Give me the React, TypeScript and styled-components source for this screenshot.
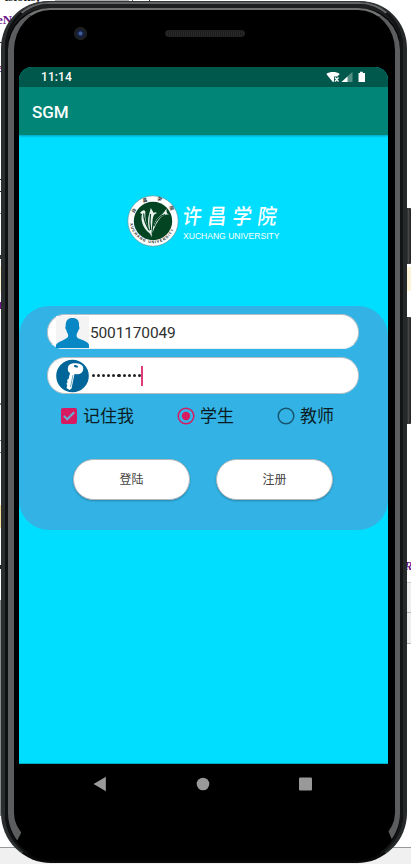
import React from 'react';
import styled, { createGlobalStyle } from 'styled-components';

const Global = createGlobalStyle`
  *, *::before, *::after { box-sizing: border-box; }
  html, body, #root { margin: 0; padding: 0; }
  body { background: #fff; overflow: hidden; font-family: Roboto, "Noto Sans CJK SC", sans-serif; }
`;

const Desktop = styled.main`
  position: relative;
  width: 411px;
  height: 864px;
  padding: 1px 3px 1px 1px;
  overflow: hidden;
  background: #fff;
`;

const Fragment = styled.i<{ $x: number; $y: number; $w: number; $h: number; $c: string }>`
  position: absolute;
  left: ${p => p.$x}px;
  top: ${p => p.$y}px;
  width: ${p => p.$w}px;
  height: ${p => p.$h}px;
  background: ${p => p.$c};
`;

const CodeText = styled.span<{ $x: number; $y: number; $italic?: boolean; $c?: string }>`
  position: absolute;
  left: ${p => p.$x}px;
  top: ${p => p.$y}px;
  font: ${p => (p.$italic ? 'italic' : 'normal')} bold 13px/16px "Liberation Serif", serif;
  color: ${p => p.$c ?? '#6b1288'};
  white-space: nowrap;
`;

const SideKey = styled.i<{ $y: number; $h: number }>`
  position: absolute;
  left: 406px;
  top: ${p => p.$y}px;
  width: 5px;
  height: ${p => p.$h}px;
  border-radius: 1px;
  background: linear-gradient(90deg, #101112 0 1px, #555 2px, #3a3b3c 3px, #222 5px);
`;

const Shell = styled.div`
  position: relative;
  width: 406px;
  height: 862px;
  border-radius: 47px 47px 50px 50px;
  border: 4px solid;
  border-width: 1px 4px 2px 4px;
  border-color: #343738 #26292a #0b0b0b #2b2e2f;
  background: #080808;
`;

const RimDark = styled.div`
  height: 100%;
  border-radius: 44px 44px 47px 47px;
  border: 1px solid;
  border-width: 2px 3px 1px 3px;
  border-color: #626465 #141516 #050505 #101112;
  background: #000;
`;

const RimGap = styled.div`
  height: 100%;
  border-radius: 41px 41px 46px 46px;
  border: solid #1d1f20;
  border-width: 4px 0 1px;
  border-bottom-color: #020202;
  background: #000;
`;

const RimLight = styled.div`
  height: 100%;
  border-radius: 42px 42px 46px 46px;
  border: solid;
  border-width: 2px 5px 12px 6px;
  border-color: #717373 #5b5d5e #000 #5b5d5e;
  background: #000;
`;

const Face = styled.div`
  height: 100%;
  margin: 0 7px 0 5px;
  display: flex;
  flex-direction: column;
`;

const Earpiece = styled.div`
  position: relative;
  height: 57px;
  flex: none;
`;

const Camera = styled.i`
  position: absolute;
  left: 55px;
  top: 17px;
  width: 13px;
  height: 13px;
  border-radius: 50%;
  background: radial-gradient(circle, #45619b 0 1.3px, #172349 2.4px 3.2px, #181a1c 4.5px, #222426 6px);
`;

const Speaker = styled.i`
  position: absolute;
  left: 146px;
  top: 20px;
  width: 80px;
  height: 7px;
  border-radius: 3px;
  background: repeating-linear-gradient(90deg, #1b1b1b 0 1px, #292929 1px 2px);
  border: 1px solid #222;
`;

const Screen = styled.section`
  width: 369px;
  height: 738px;
  flex: none;
  display: flex;
  flex-direction: column;
  border-radius: 13px 13px 0 0;
  overflow: hidden;
  background: #00deff;
`;

const StatusBar = styled.header`
  height: 20px;
  display: flex;
  align-items: center;
  justify-content: space-between;
  padding: 0 22px;
  background: #00574b;
  color: #fff;
  font-size: 12px;
  font-weight: 500;
  letter-spacing: 0.1px;
`;

const AppBar = styled.div`
  height: 48px;
  display: flex;
  align-items: center;
  padding: 2px 13px 0;
  background: #008577;
  color: #fff;
  font-size: 17px;
  font-weight: 500;
  box-shadow: 0 1px 2px rgba(0, 60, 70, 0.4);
  z-index: 1;
`;

const Brand = styled.div`
  height: 171px;
  display: flex;
  padding: 59px 0 0 108px;
  gap: 4px;
`;

const BrandText = styled.div`
  color: #fff;
  display: flex;
  flex-direction: column;
  padding-top: 7px;
`;

const BrandCn = styled.div`
  display: flex;
  gap: 6px;
  height: 28px;
  padding-left: 0;
  font: 500 19px/27px "Noto Sans CJK SC", sans-serif;
`;

const BrandGlyph = styled.span`
  transform: skewX(-8deg) scaleY(1.12);
`;

const BrandEn = styled.div`
  font: 9.5px/13px "Liberation Sans", Arial, sans-serif;
  transform: scaleX(0.9);
  transform-origin: left;
  width: 107px;
  white-space: nowrap;
`;

const Panel = styled.form`
  height: 224px;
  margin: 0;
  border-radius: 30px;
  padding: 8px 28px 0;
  background: #33b3e5;
`;

const Field = styled.label<{ $h: number; $gap: number; $flat?: boolean }>`
  display: flex;
  align-items: center;
  height: ${p => p.$h}px;
  width: 312px;
  margin-bottom: ${p => p.$gap}px;
  padding-left: 8px;
  border: 1px solid #b3bfc5;
  border-bottom-color: ${p => (p.$flat ? '#e5eef1' : '#b3bfc5')};
  border-radius: ${p => (p.$flat ? '18px 18px 16px 16px' : '18px')};
  background: #fff;
  color: #303030;
  font-size: 15.5px;
`;

const Value = styled.span`
  padding: 3px 0 0 1px;
  letter-spacing: -0.15px;
`;

const Dots = styled.span`
  display: flex;
  gap: 2px;
  padding: 0 0.5px 0 3px;
`;

const Dot = styled.i`
  width: 3.1px;
  height: 3.1px;
  border-radius: 50%;
  background: #222;
`;

const Caret = styled.i`
  width: 2px;
  height: 20px;
  background: #d81b60;
  opacity: 0.85;
`;

const Choices = styled.div`
  display: grid;
  grid-template-columns: 117px 100px 1fr;
  height: 41px;
  padding: 1px 0 0 13px;
`;

const Choice = styled.span`
  display: flex;
  align-items: center;
  height: 41px;
  gap: 5px;
  font-size: 17px;
  line-height: 24px;
  color: #0b1c24;
`;

const Buttons = styled.div`
  display: flex;
  gap: 26px;
  padding: 24px 0 0 26px;
`;

const PillButton = styled.button`
  width: 117px;
  height: 41px;
  padding: 0;
  border: 1px solid #b5b9bc;
  border-radius: 21px;
  background: #fff;
  color: #444;
  font: 12px/16px Roboto, "Noto Sans CJK SC", sans-serif;
  box-shadow: 0 1px 2px rgba(0, 30, 50, 0.3);
`;

const NavBar = styled.nav`
  height: 42px;
  margin-top: auto;
  display: flex;
  align-items: center;
  gap: 89px;
  padding: 0 0 1px 74px;
  background: #000;
  border-top: 1px solid #00a9c4;
`;

const Emblem = () => (
  <svg width="52" height="54" viewBox="0 0 52 54">
    <defs>
      <path id="arcTop" d="M7 26a19.5 19.5 0 0 1 39 0" />
      <path id="arcLow" d="M2.8 26a23.2 23.2 0 0 0 46.4 0" />
    </defs>
    <circle cx="26" cy="27" r="25.2" fill="#fff" stroke="#60979f" strokeWidth=".7" />
    <circle cx="26" cy="27" r="19.2" fill="#034522" />
    <text fontSize="4.600" fontWeight="700" fill="#17251c" fontFamily="Noto Sans CJK SC, sans-serif" letterSpacing="9">
      <textPath href="#arcTop" startOffset="6">许昌学院</textPath>
    </text>
    <text fontSize="3.800" fontWeight="700" fill="#17251c" fontFamily="Liberation Sans, sans-serif" letterSpacing=".9">
      <textPath href="#arcLow" startOffset="3.500">XUCHANG UNIVERSITY</textPath>
    </text>
    <path d="M13 19C16 15 19 15.500 18.300 20C18 28 21 34 25.500 41.500C17 36 13 28 15 20ZM24.500 43.500C21 34 20.500 28 21.500 22.500L23.800 14L26.800 19C28 18 29 18.200 30 19.200C27 19.500 26 22 25.500 27C25 33 24.500 38 24.500 43.500ZM25.500 39C26 31 28 26 33 22C36 19.500 38 17.500 39.500 14.500C39.500 18 39.500 19.500 42 20.500C37 20 34 22.500 31.500 26.500C29 30 27 34 25.500 39Z" fill="#e9f3ee" />
    <path d="M16.700 19.500c-.1 8 3.200 13 5.700 17M23.500 20c-.9 7-.6 12 .2 16M38 20.500c-5.500 1-9 6.500-11 11.500" stroke="#034522" strokeWidth="1.200" fill="none" />
  </svg>
);

const StatusIcons = () => (
  <svg width="40" height="12" viewBox="0 0 40 12">
    <path d="M.3 3C3.800.4 10.200.4 13.700 3L11.500 5.500H8v5l-1 .7Z" fill="#fff" />
    <path d="m9 6.500 3.500 4m0-4-3.500 4" stroke="#fff" strokeWidth="1.300" />
    <path d="M26.500.8V11H15.500Z" fill="#548f85" />
    <path d="M21.500 5.500V11h-6Z" fill="#fff" />
    <path d="M32.500 2H34V.7h2.800V2H39v9h-6.500Z" fill="#fff" />
  </svg>
);

const PersonIcon = () => (
  <svg width="33" height="32" viewBox="0 0 33 32">
    <path d="M0 0h33v32H0Z" fill="#f4f4f4" />
    <path d="M0 32v-3c1-3 8-4.500 11.500-7.500c1-1 .8-3 0-4.200c-.7-1-1-2-1.200-3.300c-1.200-1-1.300-3-.6-4C9.500 4.500 12 2 16.500 2s7 2.500 6.500 8c.8 1.500.5 3.500-.7 4.300c-.4 2.200-1.700 3-1.700 5c0 2.700 2 3.200 4.400 4.200c4 1.500 7.500 2.700 8 5.500v3Z" fill="#0787c3" />
  </svg>
);

const KeyIcon = () => (
  <svg width="33" height="34" viewBox="0 0 33 34">
    <circle cx="16.500" cy="17" r="16.300" fill="#006699" />
    <path d="M12 8.500C12.500 5 16 4 20 4.300C25 4.500 27.800 7 27.200 10.500C26.700 13.500 24.500 15.300 21 15.200L18.500 15L15.500 29.500L13.500 31L10.500 29L11.300 26L10.300 25L11.600 23L11 21L12.500 20L14 14C12 13 11.300 11 12 8.500Z" fill="#fff" />
    <path d="m14.500 28 2.500-12" stroke="#4d93b5" strokeWidth=".8" />
    <ellipse cx="20" cy="7.300" rx="2.200" ry="1.200" fill="#006699" transform="rotate(12 20 7.300)" />
  </svg>
);

const CheckIcon = () => (
  <svg width="18" height="18" viewBox="0 0 18 18">
    <rect x="1" y="1" width="16" height="16" rx="2" fill="#d81b60" />
    <path d="m3.800 8.900 3.400 3.400 7-7" fill="none" stroke="#66add0" strokeWidth="2" />
  </svg>
);

const RadioIcon = ({ on }: { on?: boolean }) => (
  <svg width="18" height="18" viewBox="0 0 18 18">
    <circle cx="9" cy="9" r="7.800" fill="none" stroke={on ? '#d81b60' : '#17556f'} strokeWidth="1.500" />
    {on && <circle cx="9" cy="9" r="4.200" fill="#d81b60" />}
  </svg>
);

const Back = () => <svg width="14" height="16" viewBox="0 0 14 16"><path d="M.5 8 12.900.8v14.400Z" fill="#999" /></svg>;
const Home = () => <svg width="14" height="14" viewBox="0 0 14 14"><circle cx="7" cy="7" r="6.300" fill="#999" /></svg>;
const Recent = () => <svg width="14" height="14" viewBox="0 0 14 14"><rect width="13" height="13" y=".5" rx="1" fill="#999" /></svg>;

const fragments: [number, number, number, number, string][] = [
  [0, 42, 3, 1, '#333'],
  [0, 179, 1, 1, '#222'],
  [0, 191, 1, 1, '#222'],
  [0, 213, 1, 1, '#888'],
  [0, 255, 1, 4, '#333'],
  [0, 266, 1, 26, '#fbf5cf'],
  [0, 302, 1, 7, '#6b1288'],
  [0, 403, 1, 2, '#888'],
  [0, 440, 1, 1, '#777'],
  [0, 452, 1, 1, '#777'],
  [0, 505, 1, 23, '#f5df9b'],
  [0, 565, 1, 4, '#222'],
  [0, 600, 1, 216, '#888'],
  [0, 847, 411, 1, '#999'],
  [0, 848, 411, 16, '#f0f0f0'],
  [407, 267, 4, 24, '#fdf4d8'],
  [407, 582, 4, 62, '#eee'],
  [407, 582, 4, 1, '#ccc'],
  [407, 612, 4, 1, '#bbb'],
  [407, 643, 4, 1, '#bbb'],
  [55, 0, 74, 1, '#aaa'],
  [132, 0, 1, 2, '#555'],
  [149, 0, 1, 1, '#333'],
];

export default function App() {
  return (
    <>
      <Global />
      <Desktop>
        {fragments.map(([x, y, w, h, c], i) => <Fragment key={i} $x={x} $y={y} $w={w} $h={h} $c={c} />)}
        <CodeText $x={4} $y={-11} $c="#222">tsions;</CodeText>
        <CodeText $x={-3} $y={12}>eNa</CodeText>
        <CodeText $x={-3} $y={60}>e</CodeText>
        <CodeText $x={404} $y={558} $italic>R</CodeText>
        <SideKey $y={208} $h={56} />
        <SideKey $y={317} $h={107} />
        <Shell>
          <RimDark>
            <RimGap>
              <RimLight>
                <Face>
                  <Earpiece><Camera /><Speaker /></Earpiece>
                  <Screen>
                    <StatusBar><span>11:14</span><StatusIcons /></StatusBar>
                    <AppBar>SGM</AppBar>
                    <Brand>
                      <Emblem />
                      <BrandText>
                        <BrandCn>{['许', '昌', '学', '院'].map(c => <BrandGlyph key={c}>{c}</BrandGlyph>)}</BrandCn>
                        <BrandEn>XUCHANG UNIVERSITY</BrandEn>
                      </BrandText>
                    </Brand>
                    <Panel>
                      <Field $h={35} $gap={8} $flat><PersonIcon /><Value>5001170049</Value></Field>
                      <Field $h={37} $gap={0}>
                        <KeyIcon />
                        <Dots>{Array.from({ length: 10 }, (_, i) => <Dot key={i} />)}</Dots>
                        <Caret />
                      </Field>
                      <Choices>
                        <Choice><CheckIcon />记住我</Choice>
                        <Choice><RadioIcon on />学生</Choice>
                        <Choice><RadioIcon />教师</Choice>
                      </Choices>
                      <Buttons>
                        <PillButton type="button">登陆</PillButton>
                        <PillButton type="button">注册</PillButton>
                      </Buttons>
                    </Panel>
                    <NavBar><Back /><Home /><Recent /></NavBar>
                  </Screen>
                </Face>
              </RimLight>
            </RimGap>
          </RimDark>
        </Shell>
      </Desktop>
    </>
  );
}
